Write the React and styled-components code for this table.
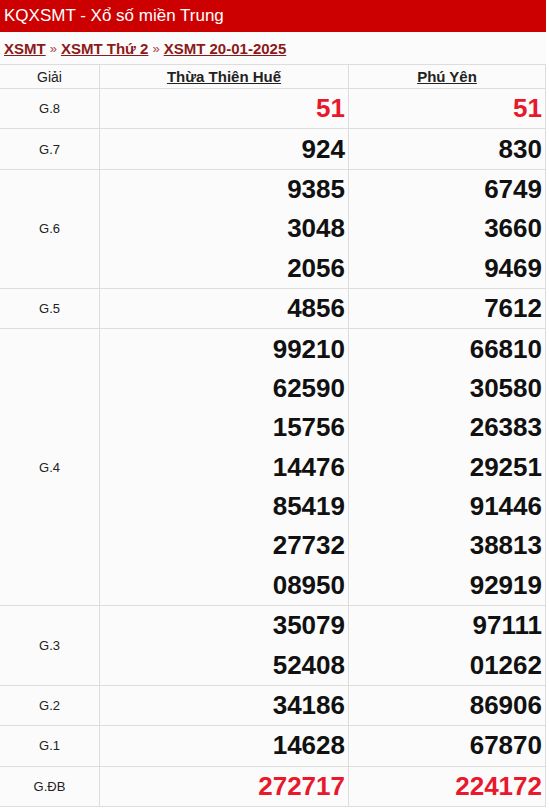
import React from "react";
import styled, { createGlobalStyle } from "styled-components";

const Global = createGlobalStyle`
  html, body { margin: 0; padding: 0; background: #ffffff; }
  body { font-family: Arial, "Liberation Sans", sans-serif; }
`;

const Page = styled.div`
  width: 546px;
  display: flex;
  flex-direction: column;
`;

const TitleBar = styled.div`
  height: 32px;
  background: #cc0000;
  color: #ffffff;
  font-size: 17px;
  display: flex;
  align-items: center;
  padding-left: 4px;
`;

const Crumbs = styled.div`
  height: 32px;
  display: flex;
  align-items: center;
  padding-left: 4px;
  font-size: 15px;
  font-weight: bold;
  background: #fbfbfb;
`;

const CrumbLink = styled.a`
  color: #8b1a1a;
  text-decoration: underline;
`;

const Sep = styled.span`
  color: #a54444;
  font-weight: normal;
  font-size: 13px;
  margin: 0 4px;
`;

const Table = styled.div`
  display: flex;
  flex-direction: column;
  border-top: 1px solid #dddddd;
  border-right: 1px solid #dddddd;
  background: #fbfbfb;
`;

const Row = styled.div`
  display: grid;
  grid-template-columns: 99px 249px 1fr;
  border-bottom: 1px solid #dddddd;
`;

const Cell = styled.div`
  display: flex;
  flex-direction: column;
  justify-content: center;
  align-items: ${(p) => (p.$label ? "center" : "flex-end")};
  border-left: ${(p) => (p.$first ? "none" : "1px solid #dddddd")};
  padding-right: ${(p) => (p.$label ? "0" : "3px")};
  font-size: 13px;
  color: #222222;
`;

const HeadCell = styled.div`
  height: 23px;
  display: flex;
  align-items: center;
  justify-content: center;
  border-left: ${(p) => (p.$first ? "none" : "1px solid #dddddd")};
  font-size: ${(p) => (p.$bold ? "15px" : "14px")};
  font-weight: ${(p) => (p.$bold ? "bold" : "normal")};
  text-decoration: ${(p) => (p.$bold ? "underline" : "none")};
  color: #222222;
`;

const Num = styled.div`
  height: 39.4px;
  display: flex;
  align-items: center;
  font-size: 26px;
  font-weight: bold;
  color: ${(p) => (p.$red ? "#e8192c" : "#111111")};
`;

const data = [
  { label: "G.8", a: ["51"], b: ["51"], red: true },
  { label: "G.7", a: ["924"], b: ["830"] },
  { label: "G.6", a: ["9385", "3048", "2056"], b: ["6749", "3660", "9469"] },
  { label: "G.5", a: ["4856"], b: ["7612"] },
  {
    label: "G.4",
    a: ["99210", "62590", "15756", "14476", "85419", "27732", "08950"],
    b: ["66810", "30580", "26383", "29251", "91446", "38813", "92919"],
  },
  { label: "G.3", a: ["35079", "52408"], b: ["97111", "01262"] },
  { label: "G.2", a: ["34186"], b: ["86906"] },
  { label: "G.1", a: ["14628"], b: ["67870"] },
  { label: "G.ĐB", a: ["272717"], b: ["224172"], red: true },
];

export default function App() {
  return (
    <>
      <Global />
      <Page>
        <TitleBar>KQXSMT - Xổ số miền Trung</TitleBar>
        <Crumbs>
          <CrumbLink>XSMT</CrumbLink>
          <Sep>»</Sep>
          <CrumbLink>XSMT Thứ 2</CrumbLink>
          <Sep>»</Sep>
          <CrumbLink>XSMT 20-01-2025</CrumbLink>
        </Crumbs>
        <Table>
          <Row>
            <HeadCell $first>Giải</HeadCell>
            <HeadCell $bold>Thừa Thiên Huế</HeadCell>
            <HeadCell $bold>Phú Yên</HeadCell>
          </Row>
          {data.map((r) => (
            <Row key={r.label}>
              <Cell $first $label>{r.label}</Cell>
              <Cell>
                {r.a.map((n, i) => (
                  <Num key={i} $red={r.red}>{n}</Num>
                ))}
              </Cell>
              <Cell>
                {r.b.map((n, i) => (
                  <Num key={i} $red={r.red}>{n}</Num>
                ))}
              </Cell>
            </Row>
          ))}
        </Table>
      </Page>
    </>
  );
}
